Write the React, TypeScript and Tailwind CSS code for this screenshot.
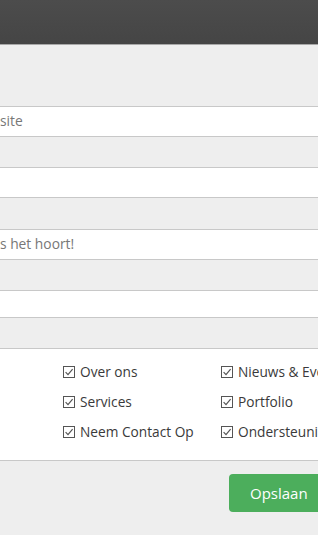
import React from "react";

const Check = () => (
  <svg width="12" height="12" viewBox="0 0 12 12" className="shrink-0">
    <rect x="0.5" y="0.5" width="11" height="11" fill="#fff" stroke="#555" strokeWidth="1" />
    <path d="M2.6 6.2 L5 8.6 L9.6 3.2" fill="none" stroke="#555" strokeWidth="1.2" />
  </svg>
);

const Item = ({ label }: { label: string }) => (
  <div className="flex items-center gap-[5px] h-[30px] whitespace-nowrap">
    <Check />
    <span>{label}</span>
  </div>
);

export default function App() {
  return (
    <div
      className="w-[318px] h-[535px] overflow-hidden bg-[#eeeeee] text-[13px]"
      style={{ fontFamily: '"Open Sans", "DejaVu Sans", sans-serif' }}
    >
      <div className="h-[44px] bg-gradient-to-b from-[#4c4c4c] to-[#454545]" />
      <div className="h-px bg-[#a8a8a8]" />
      <div className="h-[61px] bg-[#eeeeee]" />

      <div className="border-t border-[#c8c8c8] bg-white h-[30px] flex items-center text-[#777] text-[13.8px] whitespace-nowrap">
        <span>site</span>
      </div>
      <div className="border-t border-[#c8c8c8] bg-[#eeeeee] h-[31px]" />
      <div className="border-t border-[#c8c8c8] bg-white h-[30px]" />
      <div className="border-t border-[#c8c8c8] bg-[#eeeeee] h-[32px]" />
      <div className="border-t border-[#c8c8c8] bg-white h-[30px] flex items-center text-[#777] text-[13.8px] whitespace-nowrap">
        <span>s het hoort!</span>
      </div>
      <div className="border-t border-[#c8c8c8] bg-[#eeeeee] h-[31px]" />
      <div className="border-t border-[#c8c8c8] bg-white h-[27px]" />
      <div className="border-t border-[#c8c8c8] bg-[#eeeeee] h-[31px]" />

      <div className="border-t border-[#c8c8c8] bg-white h-[112px] pt-[8px] pl-[63px] flex text-[#3a3a3a] text-[13.7px] overflow-hidden">
        <div className="w-[158px] shrink-0 flex flex-col">
          <Item label="Over ons" />
          <Item label="Services" />
          <Item label="Neem Contact Op" />
        </div>
        <div className="shrink-0 flex flex-col">
          <Item label="Nieuws & Eve" />
          <Item label="Portfolio" />
          <Item label="Ondersteunin" />
        </div>
      </div>

      <div className="border-t border-[#c8c8c8] pt-[13px] pl-[229px]">
        <div className="w-[89px] h-[38px] rounded-l-[4px] bg-[#4cae5c] text-white text-[15px] flex items-center pl-[21px]">
          Opslaan
        </div>
      </div>
    </div>
  );
}
